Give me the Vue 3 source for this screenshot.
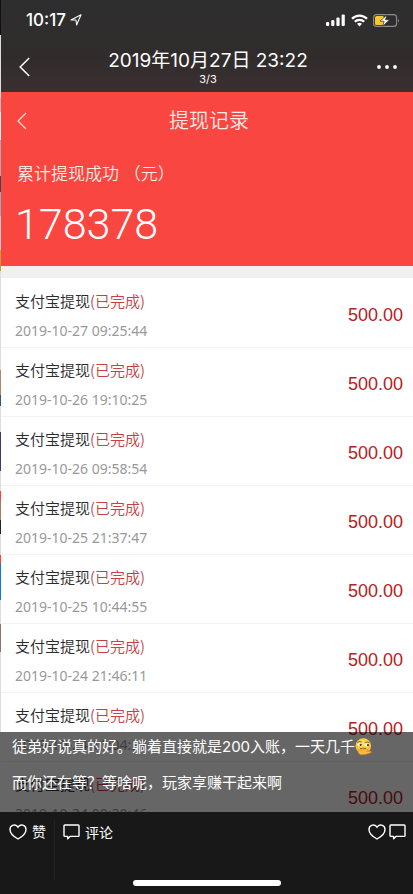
<script setup>
const records = [
  '2019-10-27 09:25:44',
  '2019-10-26 19:10:25',
  '2019-10-26 09:58:54',
  '2019-10-25 21:37:47',
  '2019-10-25 10:44:55',
  '2019-10-24 21:46:11',
  '2019-10-24 11:04:27',
  '2019-10-24 00:20:46',
]
</script>

<template>
  <div class="screen">
    <div class="edge" aria-hidden="true"></div>
    <main class="viewer">
      <header class="top">
        <div class="status">
          <span class="clock">10:17</span>
          <svg class="locate" width="12" height="12" viewBox="0 0 12 12">
            <path d="M11 .8 6.6 11 6 6 1 6Z" fill="none" stroke="#fff" stroke-width="1.1" stroke-linejoin="round" />
          </svg>
          <div class="indicators">
            <svg width="20" height="12" viewBox="0 0 20 12" fill="#fff">
              <rect x="0" y="8" width="3.2" height="4" rx="1" />
              <rect x="5.2" y="6" width="3.2" height="6" rx="1" />
              <rect x="10.4" y="3.4" width="3.2" height="8.6" rx="1" />
              <rect x="15.6" y="0.6" width="3.2" height="11.4" rx="1" />
            </svg>
            <svg width="17" height="13" viewBox="0 0 17 13" fill="none" stroke="#fff" stroke-width="2.2">
              <path d="M1 4.8C5.2.5 11.8.5 16 4.8" />
              <path d="M3.8 7.8C6.4 5.1 10.6 5.1 13.2 7.8" />
              <path d="M8.5 12.4 6 9.8Q8.5 7.6 11 9.8Z" fill="#fff" stroke="none" />
            </svg>
            <svg width="27" height="13" viewBox="0 0 27 13">
              <rect x="0.6" y="0.6" width="23" height="11.8" rx="3" fill="none" stroke="#8d8b8b" stroke-width="1.1" />
              <path d="M25 4.5Q26.8 6.5 25 8.5Z" fill="#8d8b8b" />
              <rect x="2" y="2" width="9" height="9" rx="1.5" fill="#f8c72f" />
              <path d="M14.2.7 7 7.2H11.1L9.8 12.2 16.6 5.7H12.4Z" fill="#fff" stroke="#2e2c2c" stroke-width=".7" />
            </svg>
          </div>
        </div>
        <div class="nav">
          <button class="icon-button" type="button" aria-label="返回">
            <svg width="12" height="20" viewBox="0 0 12 20" fill="none" stroke="#fff" stroke-width="1.5">
              <path d="M10.2 1 1.2 10 10.2 19" />
            </svg>
          </button>
          <div class="heading">
            <h1>2019年10月27日 23:22</h1>
            <p>3/3</p>
          </div>
          <button class="icon-button more" type="button" aria-label="更多">
            <svg width="20" height="4" viewBox="0 0 20 4" fill="#fff">
              <circle cx="2" cy="2" r="1.9" />
              <circle cx="10" cy="2" r="1.9" />
              <circle cx="18" cy="2" r="1.9" />
            </svg>
          </button>
        </div>
      </header>

      <section class="summary">
        <div class="summary-bar">
          <button class="icon-button" type="button" aria-label="返回">
            <svg width="10" height="18" viewBox="0 0 10 18" fill="none" stroke="#fbd8d2" stroke-width="1.3">
              <path d="M9 1 1 9 9 17" />
            </svg>
          </button>
          <h2>提现记录</h2>
        </div>
        <p class="label">累计提现成功 （元）</p>
        <p class="total">178378</p>
      </section>

      <section class="history">
        <ul>
          <li v-for="time in records" :key="time">
            <div>
              <p class="name">支付宝提现<span>(已完成)</span></p>
              <time>{{ time }}</time>
            </div>
            <strong>500.00</strong>
          </li>
        </ul>
        <div class="caption">
          <p>
            徒弟好说真的好。躺着直接就是200入账，一天几千<svg class="emoji" width="17" height="17" viewBox="0 0 17 17">
              <defs>
                <radialGradient id="face" cx=".5" cy=".35" r=".65">
                  <stop offset="0" stop-color="#ffe75e" />
                  <stop offset="1" stop-color="#f6b22c" />
                </radialGradient>
              </defs>
              <circle cx="8.3" cy="8" r="7.8" fill="url(#face)" />
              <path d="M2.2 4.4Q4.2 2.7 6.6 4M9.7 4.6Q12 3.2 14.4 4.8" fill="none" stroke="#8a5a16" stroke-width=".9" />
              <ellipse cx="4.7" cy="6.7" rx="2.4" ry="1.4" fill="#fff" />
              <ellipse cx="12" cy="7" rx="2.4" ry="1.4" fill="#fff" />
              <circle cx="5.7" cy="6.8" r="1.1" fill="#43301c" />
              <circle cx="13" cy="7.1" r="1.1" fill="#43301c" />
              <path d="M5 10.8Q8 9.5 11 10.6" fill="none" stroke="#8a5a16" stroke-width=".9" />
              <path d="M3 12.4Q3.8 11.2 5 12.2L12.5 11.4Q14 11.6 12.8 12.7L11 13.4 15.9 13.2Q16.9 14 15.6 14.7L12 16Q6 17.8 3.7 15.4Z" fill="#fbbc3c" stroke="#d98220" stroke-width=".5" />
            </svg>
          </p>
          <p>而你还在等？等啥呢，玩家享赚干起来啊</p>
        </div>
      </section>

      <footer>
        <div class="actions">
          <button class="action like" type="button">
            <svg width="18" height="16" viewBox="0 0 18 16" fill="none" stroke="#fff" stroke-width="1.4">
              <path d="M9 15C6.4 13.6 1 9.7 1 5.5 1 1 6.8-.7 9 3.1 11.2-.7 17 1 17 5.5 17 9.7 11.6 13.6 9 15Z" />
            </svg>
            赞
          </button>
          <button class="action" type="button">
            <svg width="17" height="16" viewBox="0 0 17 16" fill="none" stroke="#fff" stroke-width="1.4" stroke-linejoin="round">
              <path d="M1.8 1H15.2Q16 1 16 1.8V11.6Q16 12.4 15.2 12.4H7L4.6 14.8V12.4H1.8Q1 12.4 1 11.6V1.8Q1 1 1.8 1Z" />
            </svg>
            评论
          </button>
          <div class="counts">
            <button class="action" type="button" aria-label="点赞列表">
              <svg width="18" height="16" viewBox="0 0 18 16" fill="none" stroke="#fff" stroke-width="1.4">
                <path d="M9 15C6.4 13.6 1 9.7 1 5.5 1 1 6.8-.7 9 3.1 11.2-.7 17 1 17 5.5 17 9.7 11.6 13.6 9 15Z" />
              </svg>
            </button>
            <button class="action" type="button" aria-label="评论列表">
              <svg width="17" height="16" viewBox="0 0 17 16" fill="none" stroke="#fff" stroke-width="1.4" stroke-linejoin="round">
                <path d="M1.8 1H15.2Q16 1 16 1.8V11.6Q16 12.4 15.2 12.4H7L4.6 14.8V12.4H1.8Q1 12.4 1 11.6V1.8Q1 1 1.8 1Z" />
              </svg>
            </button>
          </div>
        </div>
        <div class="home"></div>
      </footer>
    </main>
  </div>
</template>

<style>
body {
  background: #181818;
}
</style>

<style scoped>
* {
  box-sizing: border-box;
}
h1, h2, p, ul {
  margin: 0;
  padding: 0;
  font-weight: 400;
}
svg {
  display: block;
  flex: none;
}
button {
  border: 0;
  padding: 0;
  background: none;
  color: inherit;
  font: inherit;
}
.screen {
  display: flex;
  height: 100vh;
  font-family: Inter, "Noto Sans CJK SC", sans-serif;
}
.edge {
  width: 1px;
  flex: none;
  background: linear-gradient(
    #111 0 35px, #ddd 35px 98px, #bbb 98px 112px, #eee 112px 140px, #aaa 140px 176px,
    #445 176px 192px, #9ab 192px 216px, #ccc 216px 250px, #c93 250px 271px, #ddd 271px 370px,
    #a86 370px 395px, #357 395px 406px, #ddd 406px 432px, #437 432px 471px, #ddd 471px 491px,
    #f43 491px 500px, #a76 500px 520px, #222 520px 534px, #ddd 534px 555px, #f43 555px 563px,
    #17d 563px 600px, #ddd 600px 624px, #876 624px 652px, #ddd 652px 732px, #666 732px 812px,
    #181818 812px
  );
}
.viewer {
  flex: 1;
  min-width: 0;
  display: flex;
  flex-direction: column;
}
.top {
  height: 92px;
  flex: none;
  color: #fff;
  background: linear-gradient(#2e2e2e, #302c2c 60%, #3b2f30);
}
.status {
  display: flex;
  align-items: center;
  height: 40px;
  padding: 0 13px 0 25px;
}
.clock {
  font-size: 17px;
  font-weight: 500;
  line-height: 20px;
}
.locate {
  margin-left: 4px;
}
.indicators {
  display: flex;
  align-items: center;
  gap: 5px;
  margin-left: auto;
}
.nav {
  display: grid;
  grid-template-columns: 20px 1fr 20px;
  align-items: center;
  height: 52px;
  padding: 0 16px 0 18px;
}
.icon-button {
  display: flex;
}
.nav .icon-button {
  padding-top: 2px;
}
.heading {
  padding-top: 2px;
  text-align: center;
}
h1 {
  font-size: 19px;
  line-height: 24px;
}
.heading p {
  font-size: 11px;
  line-height: 12px;
}
.summary {
  flex: none;
  height: 174px;
  padding: 0 14px;
  color: #fde9e5;
  background: #f94641;
}
.summary-bar {
  display: grid;
  grid-template-columns: 24px 1fr 20px;
  align-items: center;
  height: 58px;
  padding: 0 2px;
}
h2 {
  font-size: 20px;
  font-weight: 350;
  line-height: 28px;
  text-align: center;
}
.label {
  padding: 12px 2px 0;
  font-size: 17px;
  font-weight: 350;
  line-height: 24px;
}
.total {
  padding-top: 12px;
  font-family: Roboto, sans-serif;
  font-size: 43px;
  font-weight: 300;
  line-height: 52px;
  color: #fff;
}
.history {
  position: relative;
  flex: 1;
  min-height: 0;
  overflow: hidden;
  border-top: 12px solid #f1f0f0;
  background: #fff;
}
ul {
  padding-top: 1px;
  list-style: none;
}
li {
  display: flex;
  align-items: center;
  justify-content: space-between;
  height: 69px;
  padding: 4px 10px 0 14px;
  border-bottom: 1px solid #f3f3f3;
}
.name {
  font-family: "Noto Sans CJK SC", sans-serif;
  font-size: 15px;
  font-weight: 350;
  line-height: 24px;
  color: #2b2b2b;
}
.name span {
  color: #c4423f;
}
time {
  display: block;
  padding-top: 8px;
  font-family: "Noto Sans", sans-serif;
  font-size: 14px;
  font-weight: 400;
  line-height: 20px;
  color: #999;
}
strong {
  font-family: "Liberation Sans", sans-serif;
  font-size: 18px;
  font-weight: 400;
  line-height: 24px;
  color: #b7201f;
}
.caption {
  position: absolute;
  right: 0;
  bottom: 0;
  left: 0;
  display: grid;
  gap: 12px;
  height: 80px;
  padding: 3px 11px 17px;
  font-size: 15px;
  font-weight: 500;
  line-height: 24px;
  color: #fff;
  background: rgba(0, 0, 0, 0.6);
}
.emoji {
  display: inline-block;
  vertical-align: -3px;
}
footer {
  display: flex;
  flex-direction: column;
  justify-content: space-between;
  align-items: center;
  flex: none;
  height: 82px;
  padding-bottom: 8px;
  color: #fff;
  background: #181818;
}
.actions {
  display: flex;
  align-self: stretch;
  padding: 8px 7px 0 8px;
}
.action {
  display: flex;
  align-items: center;
  gap: 5px;
  height: 24px;
  font-size: 14px;
}
.like {
  align-items: flex-start;
  height: 60px;
  margin-right: 8px;
  padding-right: 8px;
  border-right: 1px solid #222;
  line-height: 24px;
}
.like svg {
  margin-top: 4px;
}
.counts {
  display: flex;
  gap: 3px;
  margin-left: auto;
}
.home {
  width: 36%;
  height: 6px;
  border-radius: 3px;
  background: #fff;
}
</style>
